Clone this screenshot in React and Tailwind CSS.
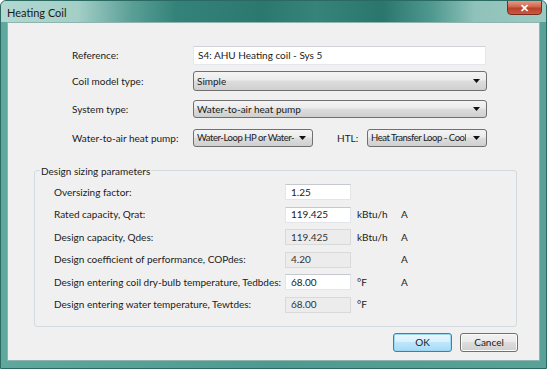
import React from "react";

function Select({ text, className, tight }) {
  return (
    <div
      className={
        "flex items-center justify-between rounded-[3px] border border-[#707070] bg-[linear-gradient(180deg,#f4f4f4_0%,#ebebeb_45%,#dddddd_50%,#cfcfcf_100%)] pl-[3px] pr-[6px] " +
        className
      }
    >
      <span
        className={
          "whitespace-nowrap overflow-hidden " +
          (tight ? "text-[9.5px] tracking-[-0.45px]" : "")
        }
      >
        {text}
      </span>
      <svg width="7" height="4" viewBox="0 0 7 4" className="shrink-0 ml-[3px]">
        <path d="M0 0 L7 0 L3.5 4 Z" fill="#111" />
      </svg>
    </div>
  );
}

function Field({ value, disabled }) {
  return (
    <div
      className={
        "h-[16px] w-[66px] flex items-center pl-[5px] border " +
        (disabled
          ? "bg-[#ececec] border-[#d9d9d9] text-[#333]"
          : "bg-white border-[#e2e6ea] border-t-[#c5c9cf]")
      }
    >
      {value}
    </div>
  );
}

function Row({ label, value, disabled, unit, a }) {
  return (
    <div className="flex items-center h-[16px]">
      <div className="w-[231px] whitespace-nowrap">{label}</div>
      <Field value={value} disabled={disabled} />
      <div className="w-[50px] pl-[6px] whitespace-nowrap">{unit}</div>
      <div>{a ? "A" : ""}</div>
    </div>
  );
}

export default function App() {
  return (
    <div className="w-[547px] h-[369px] flex flex-col overflow-hidden rounded-t-[6px] border border-[#2b6a63] bg-[linear-gradient(90deg,#5fa89e_0%,#4f9a90_50%,#5aa298_100%)] font-['Lato',sans-serif] text-[10px] text-[#1b1b1b]">
      <div className="h-[21px] shrink-0 flex justify-between bg-[linear-gradient(90deg,#b2d8d1_0%,#a3cfc7_14%,#5a9f96_24%,#34837a_32%,#2b786f_48%,#368479_58%,#2a766d_70%,#4f988f_79%,#8fc2ba_87%,#9ccac3_100%)]">
        <div className="pl-[6px] pt-[4px] text-[11px] text-[#1a1a1a]">Heating Coil</div>
        <div className="-mt-[1px] mr-[4px] w-[35px] h-[15px] flex items-center justify-center rounded-b-[4px] border border-[#7a2a1e] bg-[linear-gradient(180deg,#e89a86_0%,#d0644c_45%,#b8412a_55%,#c85a40_100%)] text-white text-[11px] font-bold leading-none">
          ✕
        </div>
      </div>
      <div className="ml-[6px] w-[533px] h-[339px] border border-[#8fb3ae] bg-[#f0f0f0] flex flex-col">
        <div className="pl-[64px] mt-[23px] flex flex-col">
          <div className="flex items-center h-[19px]">
            <div className="w-[121px]">Reference:</div>
            <div className="w-[293px] h-[19px] bg-white border border-[#e4e8ec] border-t-[#d0d4d9] flex items-center pl-[4px]">
              S4: AHU Heating coil - Sys 5
            </div>
          </div>
          <div className="flex items-center h-[20px] mt-[6px]">
            <div className="w-[121px]">Coil model type:</div>
            <Select text="Simple" className="w-[294px] h-[20px]" />
          </div>
          <div className="flex items-center h-[18px] mt-[9px]">
            <div className="w-[121px]">System type:</div>
            <Select text="Water-to-air heat pump" className="w-[294px] h-[18px]" />
          </div>
          <div className="flex items-center h-[18px] mt-[11px]">
            <div className="w-[121px]">Water-to-air heat pump:</div>
            <Select text="Water-Loop HP or Water-" tight className="w-[120px] h-[18px]" />
            <div className="w-[54px] pl-[24px]">HTL:</div>
            <Select text="Heat Transfer Loop - Cool" tight className="w-[120px] h-[18px]" />
          </div>
        </div>

        <div className="relative ml-[26px] mt-[23px] w-[483px] h-[157px] rounded-[3px] border border-[#d3dbe0] pt-[13px] pl-[19px]">
          <span className="absolute -top-[7px] left-[5px] px-[1px] bg-[#f0f0f0]">
            Design sizing parameters
          </span>
          <div className="flex flex-col gap-[6.5px]">
            <Row label="Oversizing factor:" value="1.25" />
            <Row label="Rated capacity, Qrat:" value="119.425" unit="kBtu/h" a />
            <Row label="Design capacity, Qdes:" value="119.425" disabled unit="kBtu/h" a />
            <Row label="Design coefficient of performance, COPdes:" value="4.20" disabled a />
            <Row label="Design entering coil dry-bulb temperature, Tedbdes:" value="68.00" unit="°F" a />
            <Row label="Design entering water temperature, Tewtdes:" value="68.00" disabled unit="°F" />
          </div>
        </div>

        <div className="flex justify-end gap-[8px] mt-[6px] pr-[21px]">
          <div className="w-[59px] h-[19px] flex items-center justify-center rounded-[3px] border border-[#3c7fb1] shadow-[inset_0_0_0_1px_#9ad8f4] bg-[linear-gradient(180deg,#eaf6fd_0%,#d9f0fc_45%,#bee6fd_50%,#a7d9f5_100%)]">
            OK
          </div>
          <div className="w-[58px] h-[19px] flex items-center justify-center rounded-[3px] border border-[#707070] shadow-[inset_0_0_0_1px_#fbfbfb] bg-[linear-gradient(180deg,#f2f2f2_0%,#ebebeb_45%,#dddddd_50%,#cfcfcf_100%)]">
            Cancel
          </div>
        </div>
      </div>
    </div>
  );
}
